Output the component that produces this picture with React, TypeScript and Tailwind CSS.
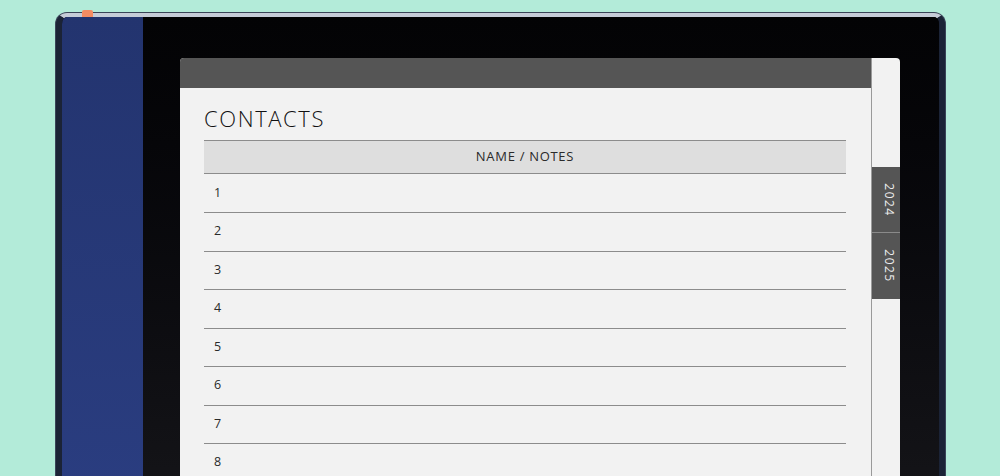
import React from "react";

export default function App() {
  const rows = [1, 2, 3, 4, 5, 6, 7, 8];
  return (
    <div className="relative w-[1000px] h-[476px] overflow-hidden bg-[#b3ebd9] pt-[12px] pl-[55px]" style={{ fontFamily: '"Open Sans", "Noto Sans", sans-serif' }}>
      <div className="absolute left-[82px] top-[10px] w-[11px] h-[7px] rounded-t-[2px] bg-[#f58c62] z-10" />
      <div className="w-[891px] h-[480px] rounded-t-[12px] bg-[#3a4458] pt-[1px] px-[1px]">
        <div className="h-full rounded-t-[11px] border-t-[4px] border-[#c6ccd8] border-x-[6px] border-x-[#1b2336] bg-[#050507] flex overflow-hidden">
          <div className="w-[81px] shrink-0 bg-gradient-to-b from-[#23346f] to-[#2a3d80]" />
          <div className="flex-1 pl-[37px] pt-[41px] bg-gradient-to-b from-[#030305] to-[#141418]">
            <div className="w-[720px] h-[500px] bg-[#f2f2f2] rounded-t-[4px] overflow-hidden flex">
              <div className="w-[691px] shrink-0">
                <div className="h-[30px] bg-[#555555]" />
                <div className="pl-[24px] pr-[25px]">
                  <div className="pt-[15px] h-[52px] text-[22px] leading-[30px] font-light tracking-[1.6px] text-[#111111]">CONTACTS</div>
                  <div className="h-[34px] bg-[#dedede] border-t border-b border-[#8c8c8c] flex items-center justify-center text-[13px] tracking-[0.7px] text-[#2a2a2a]">
                    NAME / NOTES
                  </div>
                  {rows.map((n, i) => (
                    <div
                      key={n}
                      className={`${i === 0 ? "h-[39px]" : "h-[38.5px]"} border-b border-[#8c8c8c] flex items-center pl-[10px] text-[12.5px] text-[#2a2a2a]`}
                    >
                      {n}
                    </div>
                  ))}
                </div>
              </div>
              <div className="flex-1 border-l border-[#9a9a9a] pt-[109px]">
                <div className="h-[66px] bg-[#555555] flex items-center justify-center border-b border-[#8a8a8a]">
                  <span className="rotate-90 text-[12px] tracking-[1.5px] text-[#eeeeee]">2024</span>
                </div>
                <div className="h-[66px] bg-[#555555] flex items-center justify-center">
                  <span className="rotate-90 text-[12px] tracking-[1.5px] text-[#eeeeee]">2025</span>
                </div>
              </div>
            </div>
          </div>
        </div>
      </div>
    </div>
  );
}
